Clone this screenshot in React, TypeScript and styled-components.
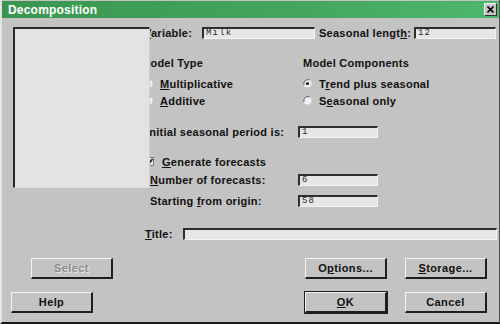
import React from 'react';
import styled, { createGlobalStyle } from 'styled-components';

const GlobalStyle = createGlobalStyle`
  html, body {
    margin: 0;
    padding: 0;
    background: #c0c0c0;
  }
  * {
    box-sizing: border-box;
  }
`;

// Window frame
const Window = styled.div`
  width: 500px;
  height: 324px;
  background: #c3c3c3;
  border-left: 2px solid #e4e4e4;
  border-right: 1px solid #505050;
  border-bottom: 2px solid #1a1a1a;
  font-family: "Liberation Sans", Arial, sans-serif;
  font-size: 11px;
  font-weight: bold;
  color: #111;
  display: flex;
  flex-direction: column;
  overflow: hidden;
`;

const TitleBar = styled.div`
  height: 17px;
  margin-top: 1px;
  background: linear-gradient(90deg, #3a964f 0%, #44a65d 60%, #4db86c 100%);
  display: flex;
  align-items: center;
  justify-content: space-between;
  padding: 0 2px 0 6px;
`;

const TitleText = styled.span`
  color: #fff;
  font-size: 12px;
  font-weight: bold;
  letter-spacing: 0.2px;
`;

const CloseButton = styled.div`
  width: 13px;
  height: 13px;
  background: #c6c6c6;
  border-top: 1px solid #f2f2f2;
  border-left: 1px solid #f2f2f2;
  border-right: 1px solid #303030;
  border-bottom: 1px solid #303030;
  display: flex;
  align-items: center;
  justify-content: center;
`;

const Body = styled.div`
  display: flex;
  flex-direction: column;
`;

const TopSection = styled.div`
  display: flex;
  align-items: flex-start;
`;

// the variable list sits over the start of the labels, as in the original dialog
const ListBox = styled.div`
  position: relative;
  z-index: 1;
  width: 137px;
  height: 161px;
  margin: 9px 0 0 11px;
  background: #e3e3e3;
  border-top: 2px solid #2a2a2a;
  border-left: 2px solid #2a2a2a;
  border-right: 1px solid #d0d0d0;
  border-bottom: 1px solid #dadada;
`;

const FormColumn = styled.div`
  margin-left: -7px;
  display: flex;
  flex-direction: column;
`;

const Row = styled.div<{ $top: number }>`
  display: flex;
  align-items: center;
  height: 13px;
  margin-top: ${p => p.$top}px;
`;

const Label = styled.div<{ $width: number; $indent?: number }>`
  width: ${p => p.$width}px;
  padding-left: ${p => p.$indent ?? 3}px;
  white-space: nowrap;
  letter-spacing: 0.25px;
`;

const Field = styled.div<{ $width: number }>`
  width: ${p => p.$width}px;
  height: 12px;
  background: #e6e6e6;
  border-top: 2px solid #2e2e2e;
  border-left: 2px solid #2e2e2e;
  border-right: 1px solid #f4f4f4;
  border-bottom: 1px solid #f4f4f4;
  font-family: "Liberation Mono", "DejaVu Sans Mono", monospace;
  font-size: 9px;
  font-weight: normal;
  color: #2a2a2a;
  line-height: 9px;
  padding-left: 2px;
  letter-spacing: 1.2px;
  overflow: hidden;
`;

const Groups = styled.div`
  display: flex;
  margin-top: 18px;
`;

const Group = styled.div<{ $width?: number; $indent: number }>`
  width: ${p => (p.$width ? `${p.$width}px` : 'auto')};
  padding-left: ${p => p.$indent}px;
  display: flex;
  flex-direction: column;
`;

const GroupHeader = styled.div<{ $shift?: number }>`
  height: 13px;
  line-height: 13px;
  margin-bottom: 5px;
  margin-left: ${p => p.$shift ?? 0}px;
  letter-spacing: 0.25px;
`;

const Option = styled.div<{ $shift?: number }>`
  height: 17px;
  display: flex;
  align-items: center;
  gap: 7px;
  margin-left: ${p => p.$shift ?? 0}px;
  letter-spacing: 0.25px;
`;

const Mark = styled.span`
  text-decoration: underline;
  text-underline-offset: 1px;
`;

const CheckRow = styled.div`
  display: flex;
  align-items: center;
  height: 13px;
  margin-top: 17px;
  padding-left: 2px;
  gap: 8px;
  letter-spacing: 0.25px;
`;

const TitleRow = styled.div`
  display: flex;
  align-items: center;
  height: 13px;
  margin-top: 20px;
  padding-left: 143px;
`;

const ButtonRow = styled.div<{ $top: number }>`
  display: flex;
  align-items: center;
  margin-top: ${p => p.$top}px;
`;

const LeftCell = styled.div`
  width: 303px;
`;

const Button = styled.div<{ $offset?: number; $disabled?: boolean; $default?: boolean }>`
  width: 82px;
  height: 21px;
  margin-left: ${p => p.$offset ?? 0}px;
  background: #c3c3c3;
  border-top: 1px solid #f4f4f4;
  border-left: 1px solid #f4f4f4;
  border-right: 2px solid #1e1e1e;
  border-bottom: 2px solid #1e1e1e;
  outline: ${p => (p.$default ? '1px solid #1e1e1e' : 'none')};
  display: flex;
  align-items: center;
  justify-content: center;
  color: ${p => (p.$disabled ? '#8e8e8e' : '#111')};
  text-shadow: ${p => (p.$disabled ? '1px 1px 0 #e6e6e6' : 'none')};
  letter-spacing: 0.4px;
`;

const Spacer = styled.div`
  width: 18px;
`;

const Radio: React.FC<{ checked?: boolean }> = ({ checked }) => (
  <svg width="9" height="9" viewBox="0 0 9 9">
    <circle cx="4.5" cy="4.5" r="4" fill="#f2f2f2" />
    <path d="M1 6 A4 4 0 0 1 6.5 1" stroke="#555" strokeWidth="1" fill="none" />
    {checked && <circle cx="4.5" cy="4.5" r="1.6" fill="#111" />}
  </svg>
);

const Check: React.FC = () => (
  <svg width="9" height="9" viewBox="0 0 9 9">
    <rect x="0.5" y="0.5" width="8" height="8" fill="#ececec" stroke="#777" />
    <path d="M2 4.5 L4 6.5 L7.5 2" stroke="#111" strokeWidth="1.5" fill="none" />
  </svg>
);

const App: React.FC = () => {
  return (
    <>
      <GlobalStyle />
      <Window>
        <TitleBar>
          <TitleText>Decomposition</TitleText>
          <CloseButton>
            <svg width="7" height="7" viewBox="0 0 7 7">
              <path d="M0.5 0.5 L6.5 6.5 M6.5 0.5 L0.5 6.5" stroke="#000" strokeWidth="1.6" />
            </svg>
          </CloseButton>
        </TitleBar>

        <Body>
          <TopSection>
            <ListBox />
            <FormColumn>
              <Row $top={8}>
                <Label $width={59} $indent={1}><Mark>V</Mark>ariable:</Label>
                <Field $width={113}>Milk</Field>
                <Label $width={99} $indent={4}>Seasonal lengt<Mark>h</Mark>:</Label>
                <Field $width={82}>12</Field>
              </Row>

              <Groups>
                <Group $width={160} $indent={2}>
                  <GroupHeader $shift={-4}>Model Type</GroupHeader>
                  <Option $shift={-1}><Radio checked /><span><Mark>M</Mark>ultiplicative</span></Option>
                  <Option $shift={-1}><Radio /><span><Mark>A</Mark>dditive</span></Option>
                </Group>
                <Group $indent={0}>
                  <GroupHeader>Model Components</GroupHeader>
                  <Option><Radio checked /><span>T<Mark>r</Mark>end plus seasonal</span></Option>
                  <Option><Radio /><span>S<Mark>e</Mark>asonal only</span></Option>
                </Group>
              </Groups>

              <Row $top={16}>
                <Label $width={155} $indent={3}>Initial seasonal period is:</Label>
                <Field $width={80}>1</Field>
              </Row>

              <CheckRow>
                <Check />
                <span><Mark>G</Mark>enerate forecasts</span>
              </CheckRow>

              <Row $top={5}>
                <Label $width={155} $indent={7}><Mark>N</Mark>umber of forecasts:</Label>
                <Field $width={80}>6</Field>
              </Row>
              <Row $top={8}>
                <Label $width={155} $indent={7}>Starting <Mark>f</Mark>rom origin:</Label>
                <Field $width={80}>58</Field>
              </Row>
            </FormColumn>
          </TopSection>

          <TitleRow>
            <Label $width={38} $indent={0}><Mark>T</Mark>itle:</Label>
            <Field $width={314} />
          </TitleRow>

          <ButtonRow $top={18}>
            <LeftCell>
              <Button $offset={29} $disabled>Select</Button>
            </LeftCell>
            <Button>O<Mark>p</Mark>tions...</Button>
            <Spacer />
            <Button><Mark>S</Mark>torage...</Button>
          </ButtonRow>

          <ButtonRow $top={13}>
            <LeftCell>
              <Button $offset={9}>Help</Button>
            </LeftCell>
            <Button $default><Mark>O</Mark>K</Button>
            <Spacer />
            <Button>Cancel</Button>
          </ButtonRow>
        </Body>
      </Window>
    </>
  );
};

export default App;
